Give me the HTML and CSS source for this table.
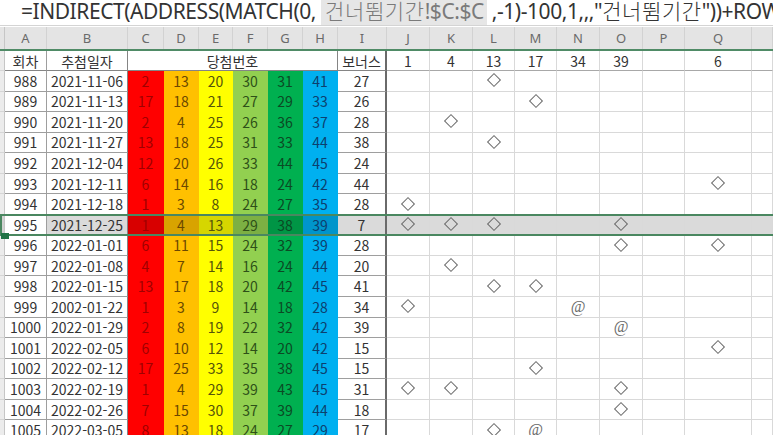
FILE: index.html
```html
<!DOCTYPE html>
<html lang="ko">
<head>
<meta charset="utf-8">
<title>로또 당첨번호</title>
<link rel="stylesheet" href="styles.css">
</head>
<body>
<div class="formula">=INDIRECT(ADDRESS(MATCH(0, <span class="ref"><span class="ko">건너뜀기간</span>!$C:$C</span> ,-1)-100,1,,,"<span class="ko">건너뜀기간</span>"))+ROW</div>
<div class="sheet">
  <div class="row cols">
    <div class="rh"></div><div class="ch">A</div><div class="ch">B</div><div class="ch">C</div><div class="ch">D</div><div class="ch">E</div><div class="ch">F</div><div class="ch">G</div><div class="ch">H</div><div class="ch">I</div><div class="ch">J</div><div class="ch">K</div><div class="ch">L</div><div class="ch">M</div><div class="ch">N</div><div class="ch">O</div><div class="ch">P</div><div class="ch">Q</div><div class="ch"></div>
  </div>
  <div class="row head">
    <div class="rh"></div><div class="c a">회차</div><div class="c b">추첨일자</div><div class="c win">당첨번호</div><div class="c bonus">보너스</div><div class="c k">1</div><div class="c k">4</div><div class="c k">13</div><div class="c k">17</div><div class="c k">34</div><div class="c k">39</div><div class="c k"></div><div class="c k">6</div><div class="c k"></div>
  </div>
  <div class="row"><div class="rh"></div><div class="c a">988</div><div class="c b">2021-11-06</div><div class="c r">2</div><div class="c o">13</div><div class="c y">20</div><div class="c lg">30</div><div class="c g">31</div><div class="c bl">41</div><div class="c bonus">27</div><div class="c m"></div><div class="c m"></div><div class="c m"><i class="dm" title="◇"></i></div><div class="c m"></div><div class="c m"></div><div class="c m"></div><div class="c m"></div><div class="c m"></div><div class="c m"></div></div>
  <div class="row"><div class="rh"></div><div class="c a">989</div><div class="c b">2021-11-13</div><div class="c r">17</div><div class="c o">18</div><div class="c y">21</div><div class="c lg">27</div><div class="c g">29</div><div class="c bl">33</div><div class="c bonus">26</div><div class="c m"></div><div class="c m"></div><div class="c m"></div><div class="c m"><i class="dm" title="◇"></i></div><div class="c m"></div><div class="c m"></div><div class="c m"></div><div class="c m"></div><div class="c m"></div></div>
  <div class="row"><div class="rh"></div><div class="c a">990</div><div class="c b">2021-11-20</div><div class="c r">2</div><div class="c o">4</div><div class="c y">25</div><div class="c lg">26</div><div class="c g">36</div><div class="c bl">37</div><div class="c bonus">28</div><div class="c m"></div><div class="c m"><i class="dm" title="◇"></i></div><div class="c m"></div><div class="c m"></div><div class="c m"></div><div class="c m"></div><div class="c m"></div><div class="c m"></div><div class="c m"></div></div>
  <div class="row"><div class="rh"></div><div class="c a">991</div><div class="c b">2021-11-27</div><div class="c r">13</div><div class="c o">18</div><div class="c y">25</div><div class="c lg">31</div><div class="c g">33</div><div class="c bl">44</div><div class="c bonus">38</div><div class="c m"></div><div class="c m"></div><div class="c m"><i class="dm" title="◇"></i></div><div class="c m"></div><div class="c m"></div><div class="c m"></div><div class="c m"></div><div class="c m"></div><div class="c m"></div></div>
  <div class="row"><div class="rh"></div><div class="c a">992</div><div class="c b">2021-12-04</div><div class="c r">12</div><div class="c o">20</div><div class="c y">26</div><div class="c lg">33</div><div class="c g">44</div><div class="c bl">45</div><div class="c bonus">24</div><div class="c m"></div><div class="c m"></div><div class="c m"></div><div class="c m"></div><div class="c m"></div><div class="c m"></div><div class="c m"></div><div class="c m"></div><div class="c m"></div></div>
  <div class="row"><div class="rh"></div><div class="c a">993</div><div class="c b">2021-12-11</div><div class="c r">6</div><div class="c o">14</div><div class="c y">16</div><div class="c lg">18</div><div class="c g">24</div><div class="c bl">42</div><div class="c bonus">44</div><div class="c m"></div><div class="c m"></div><div class="c m"></div><div class="c m"></div><div class="c m"></div><div class="c m"></div><div class="c m"></div><div class="c m"><i class="dm" title="◇"></i></div><div class="c m"></div></div>
  <div class="row"><div class="rh"></div><div class="c a">994</div><div class="c b">2021-12-18</div><div class="c r">1</div><div class="c o">3</div><div class="c y">8</div><div class="c lg">24</div><div class="c g">27</div><div class="c bl">35</div><div class="c bonus">28</div><div class="c m"><i class="dm" title="◇"></i></div><div class="c m"></div><div class="c m"></div><div class="c m"></div><div class="c m"></div><div class="c m"></div><div class="c m"></div><div class="c m"></div><div class="c m"></div></div>
  <div class="row sel"><div class="rh"></div><div class="c a">995</div><div class="c b">2021-12-25</div><div class="c r">1</div><div class="c o">4</div><div class="c y">13</div><div class="c lg">29</div><div class="c g">38</div><div class="c bl">39</div><div class="c bonus">7</div><div class="c m"><i class="dm" title="◇"></i></div><div class="c m"><i class="dm" title="◇"></i></div><div class="c m"><i class="dm" title="◇"></i></div><div class="c m"></div><div class="c m"></div><div class="c m"><i class="dm" title="◇"></i></div><div class="c m"></div><div class="c m"></div><div class="c m"></div></div>
  <div class="row"><div class="rh"></div><div class="c a">996</div><div class="c b">2022-01-01</div><div class="c r">6</div><div class="c o">11</div><div class="c y">15</div><div class="c lg">24</div><div class="c g">32</div><div class="c bl">39</div><div class="c bonus">28</div><div class="c m"></div><div class="c m"></div><div class="c m"></div><div class="c m"></div><div class="c m"></div><div class="c m"><i class="dm" title="◇"></i></div><div class="c m"></div><div class="c m"><i class="dm" title="◇"></i></div><div class="c m"></div></div>
  <div class="row"><div class="rh"></div><div class="c a">997</div><div class="c b">2022-01-08</div><div class="c r">4</div><div class="c o">7</div><div class="c y">14</div><div class="c lg">16</div><div class="c g">24</div><div class="c bl">44</div><div class="c bonus">20</div><div class="c m"></div><div class="c m"><i class="dm" title="◇"></i></div><div class="c m"></div><div class="c m"></div><div class="c m"></div><div class="c m"></div><div class="c m"></div><div class="c m"></div><div class="c m"></div></div>
  <div class="row"><div class="rh"></div><div class="c a">998</div><div class="c b">2022-01-15</div><div class="c r">13</div><div class="c o">17</div><div class="c y">18</div><div class="c lg">20</div><div class="c g">42</div><div class="c bl">45</div><div class="c bonus">41</div><div class="c m"></div><div class="c m"></div><div class="c m"><i class="dm" title="◇"></i></div><div class="c m"><i class="dm" title="◇"></i></div><div class="c m"></div><div class="c m"></div><div class="c m"></div><div class="c m"></div><div class="c m"></div></div>
  <div class="row"><div class="rh"></div><div class="c a">999</div><div class="c b">2002-01-22</div><div class="c r">1</div><div class="c o">3</div><div class="c y">9</div><div class="c lg">14</div><div class="c g">18</div><div class="c bl">28</div><div class="c bonus">34</div><div class="c m"><i class="dm" title="◇"></i></div><div class="c m"></div><div class="c m"></div><div class="c m"></div><div class="c m at">@</div><div class="c m"></div><div class="c m"></div><div class="c m"></div><div class="c m"></div></div>
  <div class="row"><div class="rh"></div><div class="c a">1000</div><div class="c b">2022-01-29</div><div class="c r">2</div><div class="c o">8</div><div class="c y">19</div><div class="c lg">22</div><div class="c g">32</div><div class="c bl">42</div><div class="c bonus">39</div><div class="c m"></div><div class="c m"></div><div class="c m"></div><div class="c m"></div><div class="c m"></div><div class="c m at">@</div><div class="c m"></div><div class="c m"></div><div class="c m"></div></div>
  <div class="row"><div class="rh"></div><div class="c a">1001</div><div class="c b">2022-02-05</div><div class="c r">6</div><div class="c o">10</div><div class="c y">12</div><div class="c lg">14</div><div class="c g">20</div><div class="c bl">42</div><div class="c bonus">15</div><div class="c m"></div><div class="c m"></div><div class="c m"></div><div class="c m"></div><div class="c m"></div><div class="c m"></div><div class="c m"></div><div class="c m"><i class="dm" title="◇"></i></div><div class="c m"></div></div>
  <div class="row"><div class="rh"></div><div class="c a">1002</div><div class="c b">2022-02-12</div><div class="c r">17</div><div class="c o">25</div><div class="c y">33</div><div class="c lg">35</div><div class="c g">38</div><div class="c bl">45</div><div class="c bonus">15</div><div class="c m"></div><div class="c m"></div><div class="c m"></div><div class="c m"><i class="dm" title="◇"></i></div><div class="c m"></div><div class="c m"></div><div class="c m"></div><div class="c m"></div><div class="c m"></div></div>
  <div class="row"><div class="rh"></div><div class="c a">1003</div><div class="c b">2022-02-19</div><div class="c r">1</div><div class="c o">4</div><div class="c y">29</div><div class="c lg">39</div><div class="c g">43</div><div class="c bl">45</div><div class="c bonus">31</div><div class="c m"><i class="dm" title="◇"></i></div><div class="c m"><i class="dm" title="◇"></i></div><div class="c m"></div><div class="c m"></div><div class="c m"></div><div class="c m"><i class="dm" title="◇"></i></div><div class="c m"></div><div class="c m"></div><div class="c m"></div></div>
  <div class="row"><div class="rh"></div><div class="c a">1004</div><div class="c b">2022-02-26</div><div class="c r">7</div><div class="c o">15</div><div class="c y">30</div><div class="c lg">37</div><div class="c g">39</div><div class="c bl">44</div><div class="c bonus">18</div><div class="c m"></div><div class="c m"></div><div class="c m"></div><div class="c m"></div><div class="c m"></div><div class="c m"><i class="dm" title="◇"></i></div><div class="c m"></div><div class="c m"></div><div class="c m"></div></div>
  <div class="row"><div class="rh"></div><div class="c a">1005</div><div class="c b">2022-03-05</div><div class="c r">8</div><div class="c o">13</div><div class="c y">18</div><div class="c lg">24</div><div class="c g">27</div><div class="c bl">29</div><div class="c bonus">17</div><div class="c m"></div><div class="c m"></div><div class="c m"><i class="dm" title="◇"></i></div><div class="c m at">@</div><div class="c m"></div><div class="c m"></div><div class="c m"></div><div class="c m"></div><div class="c m"></div></div>
</div>
</body>
</html>
```
FILE: styles.css
```css
html, body {
  margin: 0;
  padding: 0;
  background: #fff;
}
body {
  width: 773px;
  height: 435px;
  overflow: hidden;
  font-family: "Noto Sans CJK KR", "Noto Sans", sans-serif;
  color: #333;
}
.formula {
  height: 25px;
  border-bottom: 1px solid #d4d4d4;
  margin-bottom: 1px;
  padding-left: 21px;
  font-family: "Noto Sans", "Noto Sans CJK KR", sans-serif;
  font-size: 21px;
  letter-spacing: -0.45px;
  line-height: 21px;
  color: #333;
  white-space: nowrap;
  overflow: hidden;
}
.ko {
  font-family: "Noto Sans CJK KR", sans-serif;
  font-size: 21px;
  letter-spacing: 0.6px;
  font-weight: 300;
}
.ref {
  display: inline-block;
  height: 25px;
  padding: 0 3px 0 4px;
  background: #e6e6e6;
  color: #7a7a7a;
  vertical-align: top;
}
.sheet {
  display: flex;
  flex-direction: column;
}
.row {
  display: grid;
  grid-template-columns: 5px 42px 81px 36px 35px 34px 35px 35px 35px 49px 43px 43px 42px 42px 43px 43px 42px 67px 21px;
  height: 20.55px;
  font-size: 14px;
}
.rh {
  background: #ececec;
  border-right: 1px solid #c6c6c6;
  border-bottom: 1px solid #d6d6d6;
  box-sizing: border-box;
}
.cols {
  height: 24px;
  background: #e4e4e4;
  border-bottom: 2px solid #4f8b66;
  box-sizing: border-box;
  font-family: "Noto Sans", sans-serif;
  font-size: 13px;
  color: #6a6a6a;
}
.cols .rh {
  background: #e4e4e4;
  border-bottom: none;
}
.ch {
  display: flex;
  align-items: center;
  justify-content: center;
  border-right: 1px solid #d2d2d2;
  box-sizing: border-box;
}
.head {
  height: 20px;
}
.c {
  display: flex;
  align-items: center;
  justify-content: center;
  box-sizing: border-box;
  border-right: 1px solid #d9d9d9;
  border-bottom: 1px solid #d9d9d9;
  white-space: nowrap;
  overflow: hidden;
}
.a {
  border-right: 1px solid #9e9e9e;
  border-bottom: 1px solid #9e9e9e;
}
.b {
  border-right: 1px solid #858585;
  border-bottom: 1px solid #9e9e9e;
}
.win {
  grid-column: span 6;
  border-right: 1px solid #858585;
  border-bottom: 1px solid #858585;
}
.head .a, .head .b, .head .bonus {
  border-bottom-color: #858585;
}
.bonus {
  border-right: 2px solid #6a6a6a;
  border-bottom: 1px solid #9e9e9e;
}
.k {
  border-bottom: 1px solid #a8a8a8;
}
.r, .o, .y, .lg, .g, .bl {
  border-color: transparent;
}
.r { background: #ff0000; color: #a00000; }
.o { background: #ffc000; color: #6b4800; }
.y { background: #ffff00; color: #55540a; }
.lg { background: #92d050; color: #2e5018; }
.g { background: #00b050; color: #0b4a24; }
.bl { background: #00b0f0; color: #0d3f6e; }
.m {
  font-size: 14px;
  color: #5c5c5c;
}
.dm {
  display: block;
  width: 8px;
  height: 8px;
  border: 1.5px solid #6a6a6a;
  transform: rotate(45deg);
  margin-top: -1px;
}
.at {
  font-family: "Liberation Serif", serif;
  font-size: 16px;
  color: #6a6a6a;
}
.sel {
  position: relative;
}
.sel .c {
  background: #dadada;
}
.sel .a {
  background: #fff;
}
.sel .r { background: #d80000; }
.sel .o { background: #d8a300; }
.sel .y { background: #d6d600; }
.sel .lg { background: #7cb043; }
.sel .g { background: #009545; }
.sel .bl { background: #0095cb; }
.sel .rh {
  background: #d2d2d2;
}
.sel::after {
  content: "";
  position: absolute;
  left: 0;
  right: 0;
  top: -1px;
  bottom: -1px;
  border-top: 2px solid #4a8760;
  border-bottom: 2px solid #4a8760;
  border-left: 2px solid #4a8760;
  pointer-events: none;
}
.sel::before {
  content: "";
  position: absolute;
  left: 1px;
  bottom: -4px;
  width: 8px;
  height: 6px;
  background: #217346;
  z-index: 1;
}
```
